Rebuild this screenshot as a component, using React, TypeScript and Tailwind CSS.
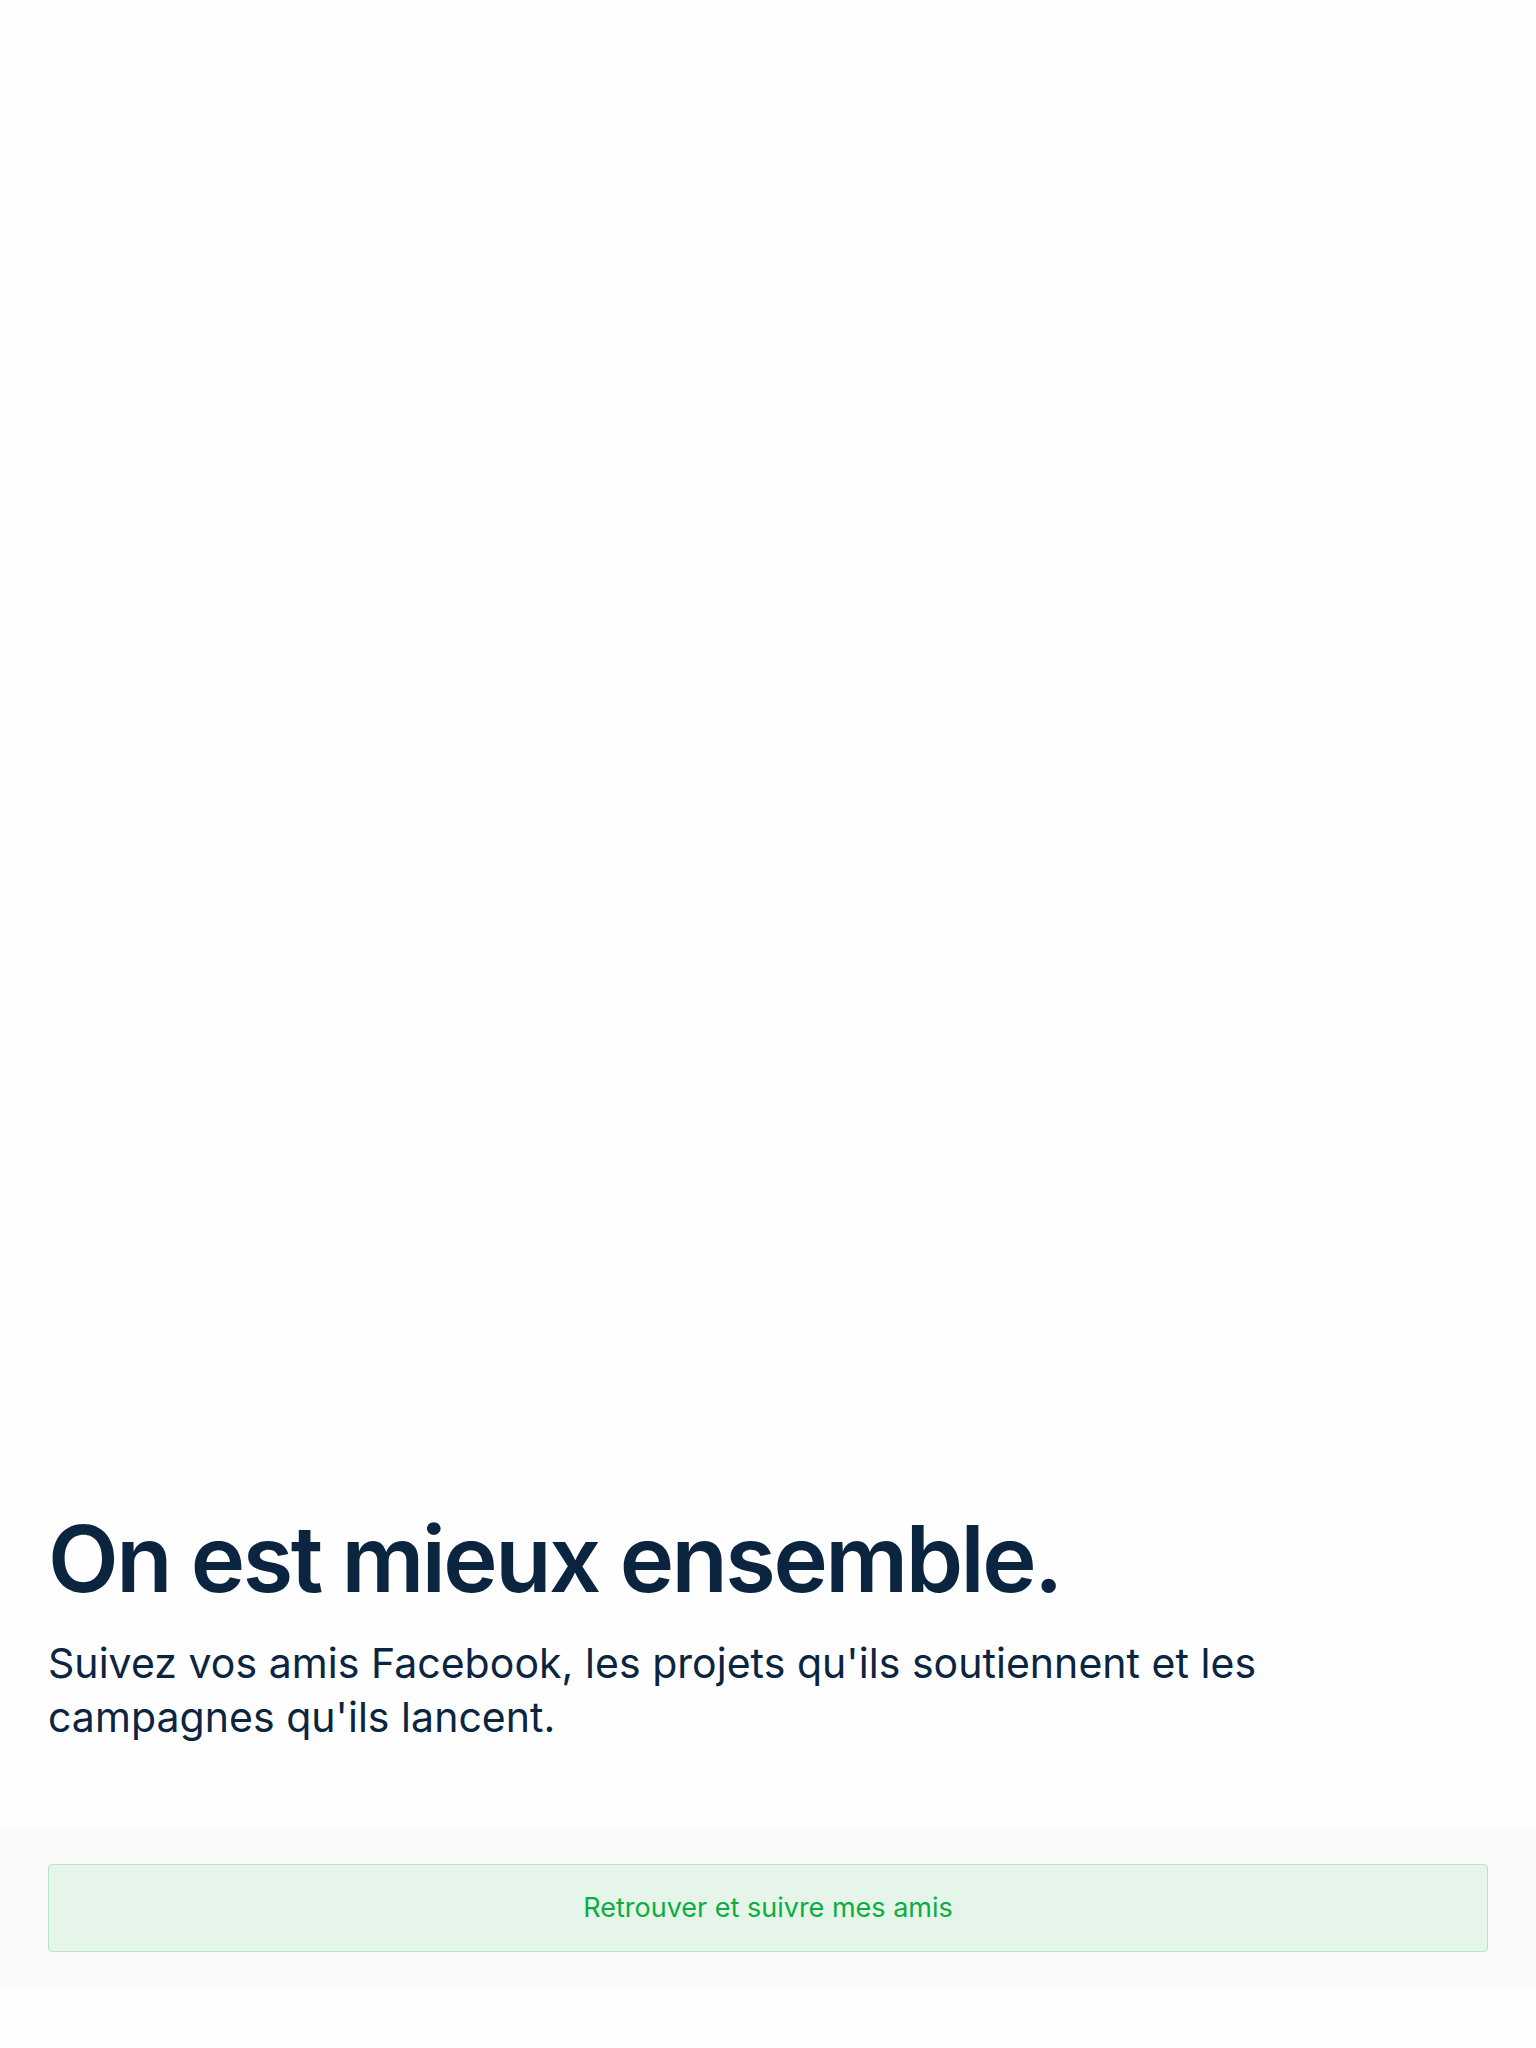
import React from "react";

export default function App() {
  return (
    <div
      className="min-h-[2048px] flex flex-col bg-[#fefefe]"
      style={{ fontFamily: "Inter, 'Noto Sans', 'Liberation Sans', sans-serif" }}
    >
      <div className="flex-1" />
      <section className="px-12">
        <h1 className="text-[92px] leading-[1.1] font-semibold tracking-[-0.027em] text-[#0b2541]">
          On est mieux ensemble.
        </h1>
        <p className="mt-[27px] text-[41px] leading-[54px] tracking-[0.001em] text-[#0b2541]">
          Suivez vos amis Facebook, les projets qu'ils soutiennent et les
          <br />
          campagnes qu'ils lancent.
        </p>
      </section>
      <div className="mt-[84px] bg-[#fafaf9] px-12 py-9">
        <button className="w-full h-[88px] rounded-[4px] border border-[#b4e6c5] bg-[#e5f5ea] text-[27px] text-[#0aad3f] flex items-center justify-center">
          Retrouver et suivre mes amis
        </button>
      </div>
      <div className="h-[60px]" />
    </div>
  );
}
